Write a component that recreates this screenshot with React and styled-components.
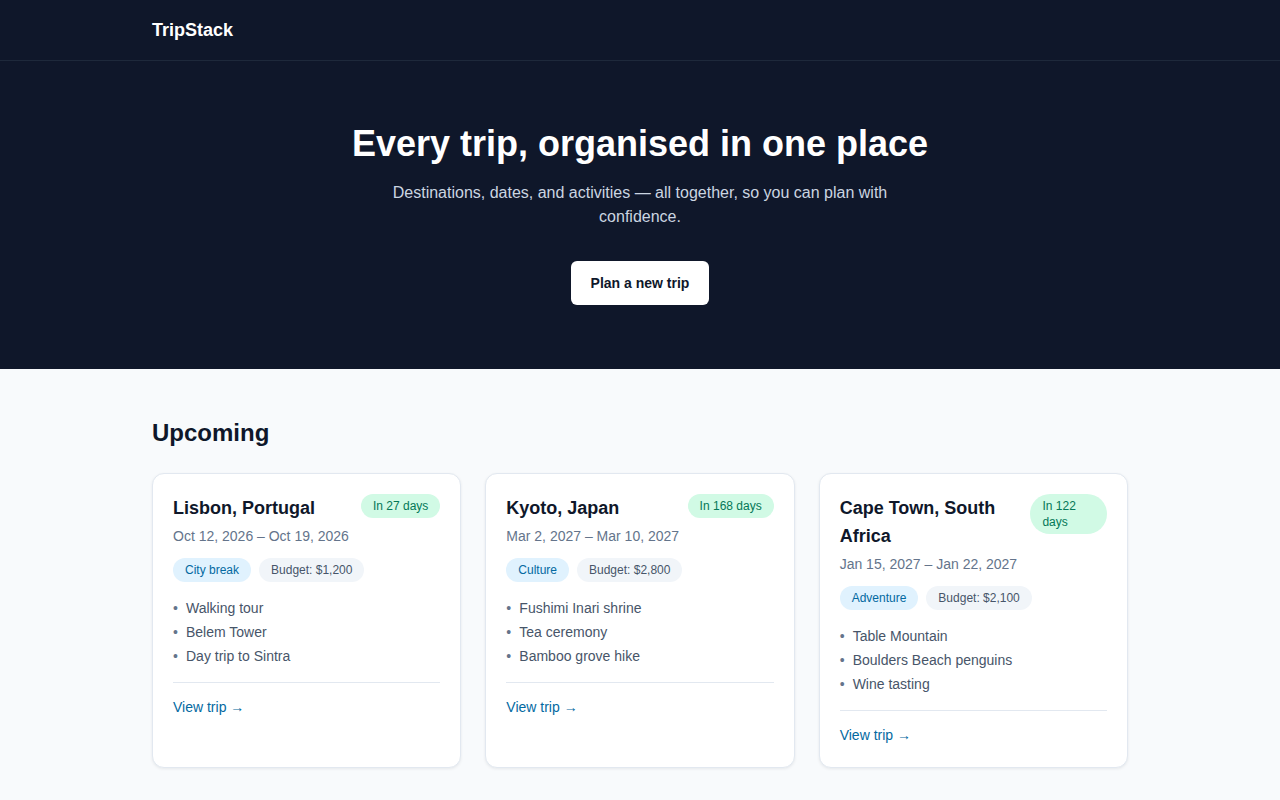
import React from 'react';
import styled, { createGlobalStyle } from 'styled-components';

const GlobalStyle = createGlobalStyle`
  * { box-sizing: border-box; }
  body {
    margin: 0;
    font-family: "Liberation Sans", Arial, sans-serif;
    background: #f8fafc;
    color: #0f172a;
  }
`;

const Container = styled.div`
  max-width: 976px;
  margin: 0 auto;
`;

const TopBar = styled.header`
  background: #0f172a;
  border-bottom: 1px solid #1e293b;
`;

const TopBarInner = styled(Container)`
  height: 60px;
  display: flex;
  align-items: center;
`;

const Logo = styled.div`
  color: #ffffff;
  font-size: 18px;
  font-weight: 700;
`;

const Hero = styled.section`
  background: #0f172a;
  padding: 61px 0 64px;
  text-align: center;
`;

const HeroTitle = styled.h1`
  margin: 0 0 16px;
  font-size: 36px;
  line-height: 1.2;
  font-weight: 700;
  color: #ffffff;
`;

const HeroText = styled.p`
  margin: 0 auto;
  max-width: 520px;
  font-size: 16px;
  line-height: 24px;
  color: #cbd5e1;
`;

const PrimaryButton = styled.button`
  margin-top: 32px;
  padding: 12px 20px;
  border: none;
  border-radius: 6px;
  background: #ffffff;
  color: #0f172a;
  font-family: inherit;
  font-size: 14px;
  line-height: 20px;
  font-weight: 700;
  cursor: pointer;
`;

const Main = styled.main`
  padding: 48px 0 64px;
`;

const SectionTitle = styled.h2`
  margin: 0 0 24px;
  font-size: 24px;
  line-height: 32px;
  font-weight: 700;
  color: #0f172a;
`;

const Grid = styled.div`
  display: grid;
  grid-template-columns: repeat(3, 1fr);
  gap: 24px;
`;

const Card = styled.article`
  background: #ffffff;
  border: 1px solid #e2e8f0;
  border-radius: 12px;
  padding: 20px 20px 22px;
  box-shadow: 0 1px 3px rgba(15, 23, 42, 0.08);
`;

const CardHead = styled.div`
  display: flex;
  justify-content: space-between;
  align-items: flex-start;
  gap: 12px;
`;

const CardTitle = styled.h3`
  margin: 0;
  font-size: 18px;
  line-height: 28px;
  font-weight: 700;
  color: #0f172a;
`;

const Pill = styled.span`
  display: inline-block;
  padding: 4px 12px;
  border-radius: 999px;
  font-size: 12px;
  line-height: 16px;
  background: ${p => p.$bg};
  color: ${p => p.$fg};
`;

const Dates = styled.div`
  margin-top: 4px;
  font-size: 14px;
  line-height: 20px;
  color: #64748b;
`;

const Tags = styled.div`
  margin-top: 12px;
  display: flex;
  gap: 8px;
`;

const Activities = styled.ul`
  margin: 14px 0 0;
  padding: 0;
  list-style: none;
`;

const Activity = styled.li`
  display: flex;
  font-size: 14px;
  line-height: 24px;
  color: #475569;

  &::before {
    content: "•";
    width: 13px;
    color: #64748b;
  }
`;

const CardFoot = styled.div`
  margin-top: 14px;
  padding-top: 14px;
  border-top: 1px solid #e2e8f0;
`;

const ViewLink = styled.a`
  font-size: 14px;
  line-height: 20px;
  color: #0369a1;
  text-decoration: none;
`;

const trips = [
  {
    name: 'Lisbon, Portugal',
    countdown: 'In 27 days',
    dates: 'Oct 12, 2026 – Oct 19, 2026',
    type: 'City break',
    budget: '$1,200',
    activities: ['Walking tour', 'Belem Tower', 'Day trip to Sintra'],
  },
  {
    name: 'Kyoto, Japan',
    countdown: 'In 168 days',
    dates: 'Mar 2, 2027 – Mar 10, 2027',
    type: 'Culture',
    budget: '$2,800',
    activities: ['Fushimi Inari shrine', 'Tea ceremony', 'Bamboo grove hike'],
  },
  {
    name: 'Cape Town, South Africa',
    countdown: 'In 122 days',
    dates: 'Jan 15, 2027 – Jan 22, 2027',
    type: 'Adventure',
    budget: '$2,100',
    activities: ['Table Mountain', 'Boulders Beach penguins', 'Wine tasting'],
  },
];

const TripCard = ({ trip }) => (
  <Card>
    <CardHead>
      <CardTitle>{trip.name}</CardTitle>
      <Pill $bg="#d1fae5" $fg="#047857">{trip.countdown}</Pill>
    </CardHead>
    <Dates>{trip.dates}</Dates>
    <Tags>
      <Pill $bg="#e0f2fe" $fg="#0369a1">{trip.type}</Pill>
      <Pill $bg="#f1f5f9" $fg="#475569">Budget: {trip.budget}</Pill>
    </Tags>
    <Activities>
      {trip.activities.map(a => <Activity key={a}>{a}</Activity>)}
    </Activities>
    <CardFoot>
      <ViewLink href="#">View trip →</ViewLink>
    </CardFoot>
  </Card>
);

export default function App() {
  return (
    <>
      <GlobalStyle />
      <TopBar>
        <TopBarInner>
          <Logo>TripStack</Logo>
        </TopBarInner>
      </TopBar>
      <Hero>
        <Container>
          <HeroTitle>Every trip, organised in one place</HeroTitle>
          <HeroText>
            Destinations, dates, and activities — all together, so you can plan with confidence.
          </HeroText>
          <PrimaryButton>Plan a new trip</PrimaryButton>
        </Container>
      </Hero>
      <Main>
        <Container>
          <SectionTitle>Upcoming</SectionTitle>
          <Grid>
            {trips.map(t => <TripCard key={t.name} trip={t} />)}
          </Grid>
        </Container>
      </Main>
    </>
  );
}
